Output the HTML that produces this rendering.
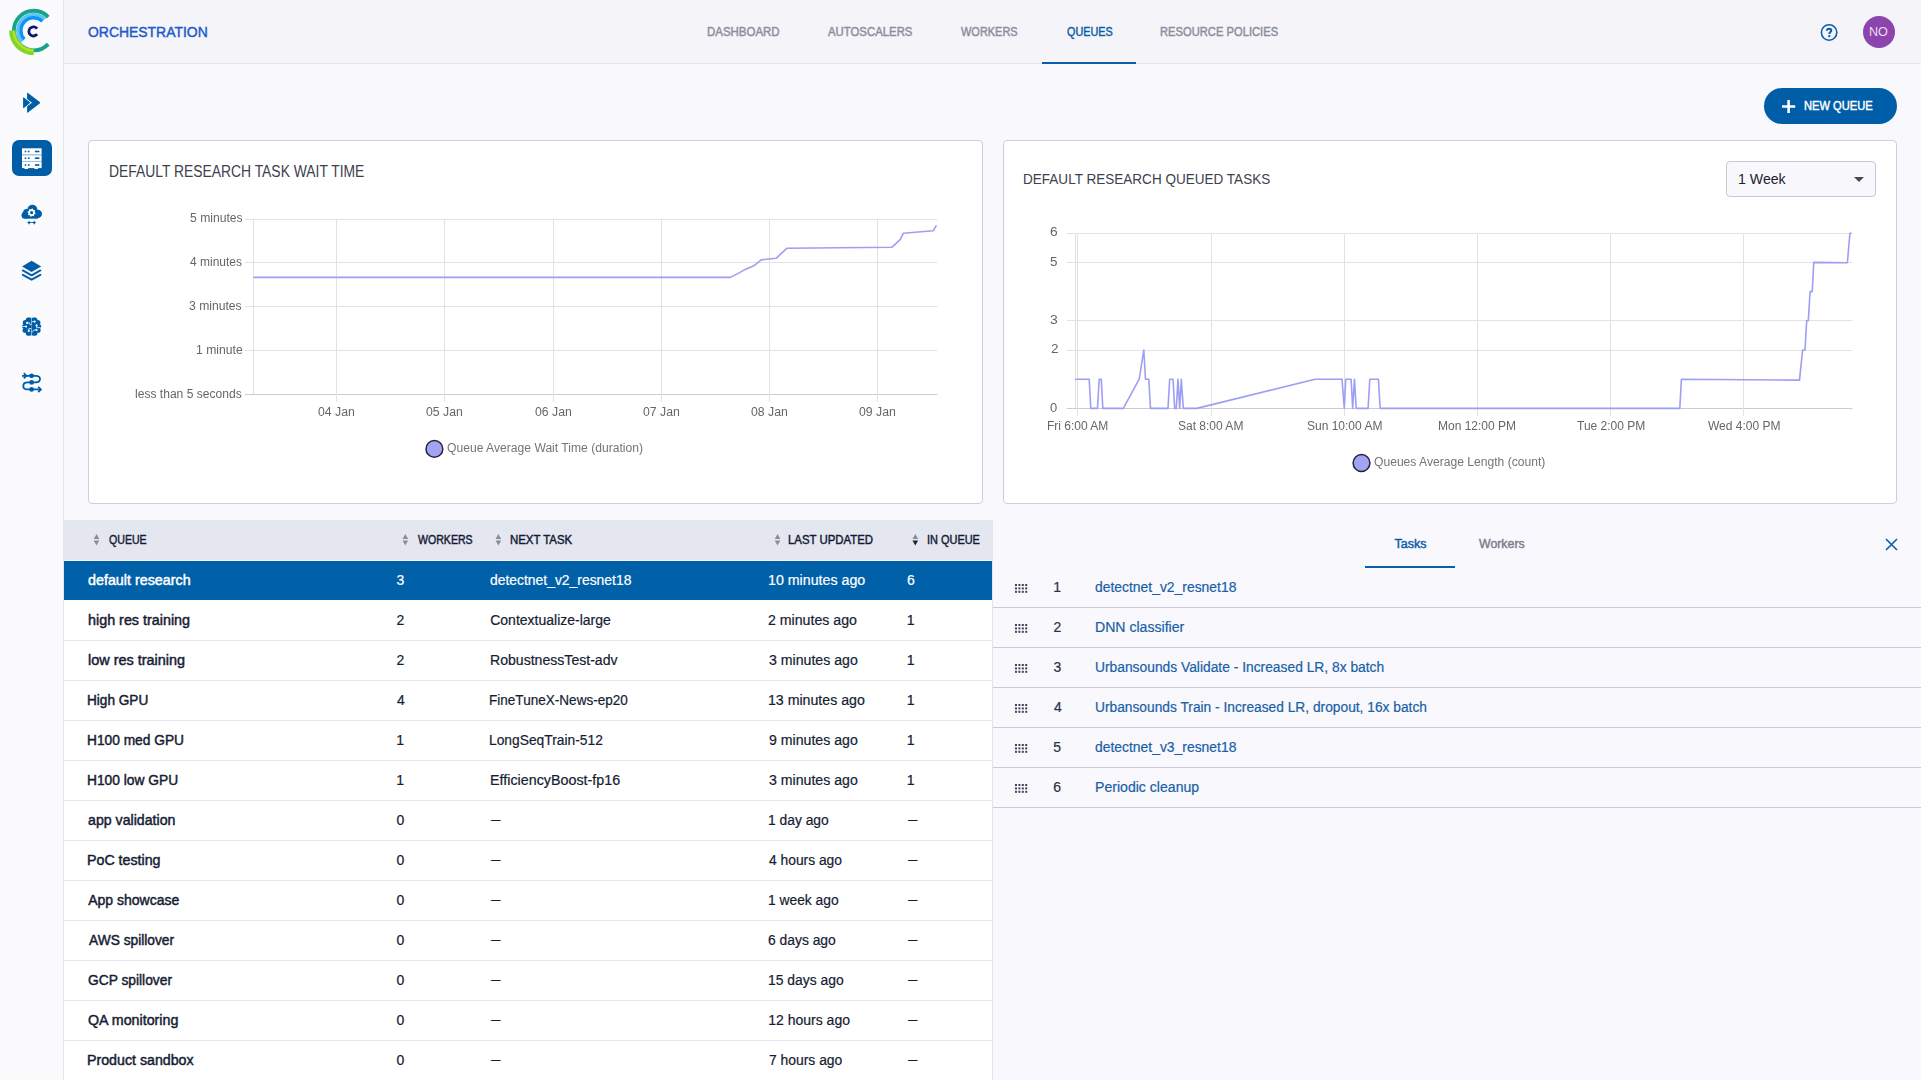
<!DOCTYPE html>
<html><head><meta charset="utf-8"><title>Orchestration - Queues</title>
<style>
*{box-sizing:border-box;margin:0;padding:0}
html,body{width:1921px;height:1080px;overflow:hidden}
body{background:#f8f8fd;font-family:"Liberation Sans",sans-serif;position:relative}
.a{position:absolute}
.t{position:absolute;white-space:pre;line-height:0;transform-origin:0 0}
.g{will-change:transform}
svg{position:absolute;left:0;top:0;overflow:visible}
</style></head><body>
<!-- sidebar -->
<div class="a" style="left:0;top:0;width:64px;height:1080px;background:#fbfbfd;border-right:1px solid #e4e6ef"></div>
<!-- header -->
<div class="a" style="left:64px;top:0;width:1857px;height:64px;background:#f4f4f9;border-bottom:1px solid #e3e5ee"></div>
<div class="a" style="left:1042px;top:62px;width:94px;height:2px;background:#0d5ea8"></div>
<!-- selected nav box -->
<div class="a" style="left:12px;top:140px;width:40px;height:36px;border-radius:7px;background:#005ea8"></div>
<!-- avatar -->
<div class="a" style="left:1863px;top:16px;width:32px;height:32px;border-radius:50%;background:#8e44ad"></div>
<!-- new queue button -->
<div class="a" style="left:1764px;top:88px;width:133px;height:36px;border-radius:18px;background:#005ea8"></div>
<!-- cards -->
<div class="a" style="left:88px;top:140px;width:895px;height:364px;background:#fff;border:1px solid #cdd0dc;border-radius:4px"></div>
<div class="a" style="left:1003px;top:140px;width:894px;height:364px;background:#fff;border:1px solid #cdd0dc;border-radius:4px"></div>
<!-- dropdown -->
<div class="a" style="left:1726px;top:161px;width:150px;height:36px;background:#f8f8fc;border:1px solid #c6c8d4;border-radius:4px"></div>
<!-- table -->
<div class="a" style="left:64px;top:520px;width:929px;height:40px;background:#e5e7f0"></div>
<div class="a" style="left:64px;top:560px;width:928px;height:520px;background:#fff"></div>
<div class="a" style="left:64px;top:560px;width:928px;height:1px;background:#f2f2f8"></div>
<div class="a" style="left:64px;top:561px;width:928px;height:39px;background:#0060a8"></div>
<div class="a" style="left:992px;top:560px;width:1px;height:520px;background:#e3e5ee"></div>
<svg width="1921" height="1080" viewBox="0 0 1921 1080">
<line x1="245" y1="219.5" x2="937.5" y2="219.5" stroke="#e2e2e2" stroke-width="1"/>
<line x1="245" y1="262.5" x2="937.5" y2="262.5" stroke="#e2e2e2" stroke-width="1"/>
<line x1="245" y1="306.5" x2="937.5" y2="306.5" stroke="#e2e2e2" stroke-width="1"/>
<line x1="245" y1="350.5" x2="937.5" y2="350.5" stroke="#e2e2e2" stroke-width="1"/>
<line x1="245" y1="394.5" x2="937.5" y2="394.5" stroke="#cccccc" stroke-width="1"/>
<line x1="253.5" y1="219" x2="253.5" y2="394" stroke="#e2e2e2" stroke-width="1"/>
<line x1="336.5" y1="219" x2="336.5" y2="402" stroke="#e2e2e2" stroke-width="1"/>
<line x1="444.5" y1="219" x2="444.5" y2="402" stroke="#e2e2e2" stroke-width="1"/>
<line x1="553.5" y1="219" x2="553.5" y2="402" stroke="#e2e2e2" stroke-width="1"/>
<line x1="661.5" y1="219" x2="661.5" y2="402" stroke="#e2e2e2" stroke-width="1"/>
<line x1="769.5" y1="219" x2="769.5" y2="402" stroke="#e2e2e2" stroke-width="1"/>
<line x1="877.5" y1="219" x2="877.5" y2="402" stroke="#e2e2e2" stroke-width="1"/>
<polyline fill="none" stroke="#9e9ef4" stroke-width="1.6" stroke-linejoin="round" points="253.5,277.4 730.3,277.4 738.3,273.4 745.2,269.4 754.4,265.4 761.2,259.9 776.1,258.3 787,248.2 891.8,247.3 900.4,239.3 903.3,233.3 933.1,230.8 936.5,225.3"/>
<line x1="1067" y1="233.5" x2="1852.5" y2="233.5" stroke="#e2e2e2" stroke-width="1"/>
<line x1="1067" y1="262.5" x2="1852.5" y2="262.5" stroke="#e2e2e2" stroke-width="1"/>
<line x1="1067" y1="320.5" x2="1852.5" y2="320.5" stroke="#e2e2e2" stroke-width="1"/>
<line x1="1067" y1="350.5" x2="1852.5" y2="350.5" stroke="#e2e2e2" stroke-width="1"/>
<line x1="1067" y1="408.5" x2="1852.5" y2="408.5" stroke="#cccccc" stroke-width="1"/>
<line x1="1075.5" y1="233" x2="1075.5" y2="408" stroke="#e2e2e2" stroke-width="1"/>
<line x1="1077.5" y1="233" x2="1077.5" y2="416" stroke="#e2e2e2" stroke-width="1"/>
<line x1="1211.5" y1="233" x2="1211.5" y2="416" stroke="#e2e2e2" stroke-width="1"/>
<line x1="1344.5" y1="233" x2="1344.5" y2="416" stroke="#e2e2e2" stroke-width="1"/>
<line x1="1477.5" y1="233" x2="1477.5" y2="416" stroke="#e2e2e2" stroke-width="1"/>
<line x1="1610.5" y1="233" x2="1610.5" y2="416" stroke="#e2e2e2" stroke-width="1"/>
<line x1="1743.5" y1="233" x2="1743.5" y2="416" stroke="#e2e2e2" stroke-width="1"/>
<polyline fill="none" stroke="#9e9ef4" stroke-width="1.6" stroke-linejoin="round" points="1075.3,379.2 1089.2,379.2 1090.8,408.4 1097.5,408.4 1099.2,379.2 1101.3,379.2 1102.8,408.4 1123.3,408.4 1139.2,379.2 1143.8,350.0 1145.5,379.2 1148.8,379.2 1150.5,408.4 1168.0,408.4 1169.7,379.2 1173.0,379.2 1174.7,408.4 1176.3,408.4 1178.0,379.2 1179.7,408.4 1181.3,379.2 1183.3,408.4 1196.7,408.4 1315.0,379.2 1342.0,379.2 1344.3,408.4 1345.7,379.2 1351.1,379.2 1352.7,408.4 1354.5,379.2 1356.2,408.4 1368.1,408.4 1369.8,379.2 1378.4,379.2 1380.2,408.4 1679.8,408.4 1681.4,379.2 1799.5,380.1 1802.6,350.0 1805.0,350.0 1806.7,320.8 1808.3,320.8 1810.1,291.6 1812.2,291.6 1813.8,262.4 1847.4,262.7 1849.9,233.2 1851.5,233.2"/>
<circle cx="434.4" cy="448.9" r="8.4" fill="#a3a3f6" stroke="#23243a" stroke-width="1.5"/>
<circle cx="1361.5" cy="463" r="8.4" fill="#a3a3f6" stroke="#23243a" stroke-width="1.5"/>
<path d="M1854 177 L1864 177 L1859 182 Z" fill="#474a56"/>
<path d="M93.75 539 L99.35 539 L96.55 534 Z" fill="#8a8c96"/>
<path d="M93.75 540.5 L99.35 540.5 L96.55 545.5 Z" fill="#8a8c96"/>
<path d="M402.5 539 L408.1 539 L405.3 534 Z" fill="#8a8c96"/>
<path d="M402.5 540.5 L408.1 540.5 L405.3 545.5 Z" fill="#8a8c96"/>
<path d="M495.6 539 L501.20000000000005 539 L498.40000000000003 534 Z" fill="#8a8c96"/>
<path d="M495.6 540.5 L501.20000000000005 540.5 L498.40000000000003 545.5 Z" fill="#8a8c96"/>
<path d="M774.75 539 L780.35 539 L777.55 534 Z" fill="#8a8c96"/>
<path d="M774.75 540.5 L780.35 540.5 L777.55 545.5 Z" fill="#8a8c96"/>
<path d="M912.5 539 L918.1 539 L915.3 534 Z" fill="#8a8c96"/>
<path d="M912.5 540.5 L918.1 540.5 L915.3 545.5 Z" fill="#202230"/>
<line x1="64" y1="640.5" x2="992" y2="640.5" stroke="#e4e6ef" stroke-width="1"/>
<line x1="64" y1="680.5" x2="992" y2="680.5" stroke="#e4e6ef" stroke-width="1"/>
<line x1="64" y1="720.5" x2="992" y2="720.5" stroke="#e4e6ef" stroke-width="1"/>
<line x1="64" y1="760.5" x2="992" y2="760.5" stroke="#e4e6ef" stroke-width="1"/>
<line x1="64" y1="800.5" x2="992" y2="800.5" stroke="#e4e6ef" stroke-width="1"/>
<line x1="64" y1="840.5" x2="992" y2="840.5" stroke="#e4e6ef" stroke-width="1"/>
<line x1="64" y1="880.5" x2="992" y2="880.5" stroke="#e4e6ef" stroke-width="1"/>
<line x1="64" y1="920.5" x2="992" y2="920.5" stroke="#e4e6ef" stroke-width="1"/>
<line x1="64" y1="960.5" x2="992" y2="960.5" stroke="#e4e6ef" stroke-width="1"/>
<line x1="64" y1="1000.5" x2="992" y2="1000.5" stroke="#e4e6ef" stroke-width="1"/>
<line x1="64" y1="1040.5" x2="992" y2="1040.5" stroke="#e4e6ef" stroke-width="1"/>
<line x1="993" y1="607.5" x2="1921" y2="607.5" stroke="#c9cbd6" stroke-width="1"/>
<rect x="1015.0" y="584.0" width="2" height="2" fill="#3e4152"/>
<rect x="1018.4" y="584.0" width="2" height="2" fill="#3e4152"/>
<rect x="1021.8" y="584.0" width="2" height="2" fill="#3e4152"/>
<rect x="1025.2" y="584.0" width="2" height="2" fill="#3e4152"/>
<rect x="1015.0" y="587.4" width="2" height="2" fill="#3e4152"/>
<rect x="1018.4" y="587.4" width="2" height="2" fill="#3e4152"/>
<rect x="1021.8" y="587.4" width="2" height="2" fill="#3e4152"/>
<rect x="1025.2" y="587.4" width="2" height="2" fill="#3e4152"/>
<rect x="1015.0" y="590.8" width="2" height="2" fill="#3e4152"/>
<rect x="1018.4" y="590.8" width="2" height="2" fill="#3e4152"/>
<rect x="1021.8" y="590.8" width="2" height="2" fill="#3e4152"/>
<rect x="1025.2" y="590.8" width="2" height="2" fill="#3e4152"/>
<line x1="993" y1="647.5" x2="1921" y2="647.5" stroke="#c9cbd6" stroke-width="1"/>
<rect x="1015.0" y="624.0" width="2" height="2" fill="#3e4152"/>
<rect x="1018.4" y="624.0" width="2" height="2" fill="#3e4152"/>
<rect x="1021.8" y="624.0" width="2" height="2" fill="#3e4152"/>
<rect x="1025.2" y="624.0" width="2" height="2" fill="#3e4152"/>
<rect x="1015.0" y="627.4" width="2" height="2" fill="#3e4152"/>
<rect x="1018.4" y="627.4" width="2" height="2" fill="#3e4152"/>
<rect x="1021.8" y="627.4" width="2" height="2" fill="#3e4152"/>
<rect x="1025.2" y="627.4" width="2" height="2" fill="#3e4152"/>
<rect x="1015.0" y="630.8" width="2" height="2" fill="#3e4152"/>
<rect x="1018.4" y="630.8" width="2" height="2" fill="#3e4152"/>
<rect x="1021.8" y="630.8" width="2" height="2" fill="#3e4152"/>
<rect x="1025.2" y="630.8" width="2" height="2" fill="#3e4152"/>
<line x1="993" y1="687.5" x2="1921" y2="687.5" stroke="#c9cbd6" stroke-width="1"/>
<rect x="1015.0" y="664.0" width="2" height="2" fill="#3e4152"/>
<rect x="1018.4" y="664.0" width="2" height="2" fill="#3e4152"/>
<rect x="1021.8" y="664.0" width="2" height="2" fill="#3e4152"/>
<rect x="1025.2" y="664.0" width="2" height="2" fill="#3e4152"/>
<rect x="1015.0" y="667.4" width="2" height="2" fill="#3e4152"/>
<rect x="1018.4" y="667.4" width="2" height="2" fill="#3e4152"/>
<rect x="1021.8" y="667.4" width="2" height="2" fill="#3e4152"/>
<rect x="1025.2" y="667.4" width="2" height="2" fill="#3e4152"/>
<rect x="1015.0" y="670.8" width="2" height="2" fill="#3e4152"/>
<rect x="1018.4" y="670.8" width="2" height="2" fill="#3e4152"/>
<rect x="1021.8" y="670.8" width="2" height="2" fill="#3e4152"/>
<rect x="1025.2" y="670.8" width="2" height="2" fill="#3e4152"/>
<line x1="993" y1="727.5" x2="1921" y2="727.5" stroke="#c9cbd6" stroke-width="1"/>
<rect x="1015.0" y="704.0" width="2" height="2" fill="#3e4152"/>
<rect x="1018.4" y="704.0" width="2" height="2" fill="#3e4152"/>
<rect x="1021.8" y="704.0" width="2" height="2" fill="#3e4152"/>
<rect x="1025.2" y="704.0" width="2" height="2" fill="#3e4152"/>
<rect x="1015.0" y="707.4" width="2" height="2" fill="#3e4152"/>
<rect x="1018.4" y="707.4" width="2" height="2" fill="#3e4152"/>
<rect x="1021.8" y="707.4" width="2" height="2" fill="#3e4152"/>
<rect x="1025.2" y="707.4" width="2" height="2" fill="#3e4152"/>
<rect x="1015.0" y="710.8" width="2" height="2" fill="#3e4152"/>
<rect x="1018.4" y="710.8" width="2" height="2" fill="#3e4152"/>
<rect x="1021.8" y="710.8" width="2" height="2" fill="#3e4152"/>
<rect x="1025.2" y="710.8" width="2" height="2" fill="#3e4152"/>
<line x1="993" y1="767.5" x2="1921" y2="767.5" stroke="#c9cbd6" stroke-width="1"/>
<rect x="1015.0" y="744.0" width="2" height="2" fill="#3e4152"/>
<rect x="1018.4" y="744.0" width="2" height="2" fill="#3e4152"/>
<rect x="1021.8" y="744.0" width="2" height="2" fill="#3e4152"/>
<rect x="1025.2" y="744.0" width="2" height="2" fill="#3e4152"/>
<rect x="1015.0" y="747.4" width="2" height="2" fill="#3e4152"/>
<rect x="1018.4" y="747.4" width="2" height="2" fill="#3e4152"/>
<rect x="1021.8" y="747.4" width="2" height="2" fill="#3e4152"/>
<rect x="1025.2" y="747.4" width="2" height="2" fill="#3e4152"/>
<rect x="1015.0" y="750.8" width="2" height="2" fill="#3e4152"/>
<rect x="1018.4" y="750.8" width="2" height="2" fill="#3e4152"/>
<rect x="1021.8" y="750.8" width="2" height="2" fill="#3e4152"/>
<rect x="1025.2" y="750.8" width="2" height="2" fill="#3e4152"/>
<line x1="993" y1="807.5" x2="1921" y2="807.5" stroke="#c9cbd6" stroke-width="1"/>
<rect x="1015.0" y="784.0" width="2" height="2" fill="#3e4152"/>
<rect x="1018.4" y="784.0" width="2" height="2" fill="#3e4152"/>
<rect x="1021.8" y="784.0" width="2" height="2" fill="#3e4152"/>
<rect x="1025.2" y="784.0" width="2" height="2" fill="#3e4152"/>
<rect x="1015.0" y="787.4" width="2" height="2" fill="#3e4152"/>
<rect x="1018.4" y="787.4" width="2" height="2" fill="#3e4152"/>
<rect x="1021.8" y="787.4" width="2" height="2" fill="#3e4152"/>
<rect x="1025.2" y="787.4" width="2" height="2" fill="#3e4152"/>
<rect x="1015.0" y="790.8" width="2" height="2" fill="#3e4152"/>
<rect x="1018.4" y="790.8" width="2" height="2" fill="#3e4152"/>
<rect x="1021.8" y="790.8" width="2" height="2" fill="#3e4152"/>
<rect x="1025.2" y="790.8" width="2" height="2" fill="#3e4152"/>
<rect x="1365" y="566" width="90" height="2" fill="#0d5ea8"/>
<path d="M1886 539 L1897 550 M1897 539 L1886 550" stroke="#0d5ea8" stroke-width="1.6"/>
<path d="M1788.6 100 V113 M1782 106.5 H1795.2" stroke="#fff" stroke-width="2.6"/>
</svg><svg width="1921" height="1080" viewBox="0 0 1921 1080">
<path d="M48.18 17.10 A19.8 19.8 0 1 0 48.18 44.10" fill="none" stroke="#17a589" stroke-width="3.9"/>
<path d="M44.88 19.02 A16.1 16.1 0 0 0 22.12 41.78" fill="none" stroke="#5cc4f6" stroke-width="3.4"/>
<path d="M42.43 21.24 A12.8 12.8 0 0 0 24.34 39.33" fill="none" stroke="#0a96f2" stroke-width="3.4"/>
<path d="M10.70 30.60 A23 23 0 0 0 33.70 53.60" fill="none" stroke="#7fd629" stroke-width="3.2"/>
<path d="M13.80 30.60 A19.9 19.9 0 0 0 33.70 50.50" fill="none" stroke="#b2e21b" stroke-width="3.0"/>
<path d="M37.12 28.57 A4.6 4.6 0 1 0 37.12 34.23" fill="none" stroke="#0b1a6b" stroke-width="2.8"/>
<path d="M23.6 97.8 L29.8 102.7 L23.6 107.7 Z" fill="#005ea8" stroke="#005ea8" stroke-width="1" stroke-linejoin="round"/>
<path d="M27.6 93.2 L40 102.7 L27.6 112.3 L27.6 106.4 L32.8 102.7 L27.6 99 Z" fill="#005ea8" stroke="#005ea8" stroke-width="1" stroke-linejoin="round"/>
<rect x="22" y="148.3" width="19.6" height="6.2" fill="#fff"/>
<rect x="22" y="155.2" width="19.6" height="6.0" fill="#fff"/>
<rect x="22" y="161.9" width="19.6" height="6.2" fill="#fff"/>
<rect x="22" y="154.5" width="19.6" height="0.8" fill="#d6e2ee"/>
<rect x="22" y="161.2" width="19.6" height="0.8" fill="#b9cfe2"/>
<rect x="24.7" y="150.7" width="1.6" height="1.6" fill="#005ea8"/>
<rect x="27.9" y="150.7" width="1.6" height="1.6" fill="#005ea8"/>
<rect x="34.9" y="150.7" width="4.5" height="1.6" fill="#005ea8"/>
<rect x="24.7" y="157.39999999999998" width="1.6" height="1.6" fill="#005ea8"/>
<rect x="27.9" y="157.39999999999998" width="1.6" height="1.6" fill="#005ea8"/>
<rect x="34.9" y="157.39999999999998" width="4.5" height="1.6" fill="#005ea8"/>
<rect x="24.7" y="164.2" width="1.6" height="1.6" fill="#005ea8"/>
<rect x="27.9" y="164.2" width="1.6" height="1.6" fill="#005ea8"/>
<rect x="34.9" y="164.2" width="4.5" height="1.6" fill="#005ea8"/>
<rect x="24.5" y="168" width="3.5" height="1" fill="#fff"/><rect x="34.5" y="168" width="3.5" height="1" fill="#fff"/>
<circle cx="32.4" cy="209.8" r="5.0" fill="#005ea8"/>
<circle cx="26.6" cy="212.4" r="3.5" fill="#005ea8"/>
<circle cx="25.0" cy="215.2" r="3.5" fill="#005ea8"/>
<circle cx="37.8" cy="213.9" r="4.2" fill="#005ea8"/>
<rect x="25" y="212" width="13" height="6.7" fill="#005ea8"/>
<polygon points="35.92,213.46 34.18,214.32 34.04,216.26 32.20,215.64 30.74,216.92 29.88,215.18 27.94,215.04 28.56,213.20 27.28,211.74 29.02,210.88 29.16,208.94 31.00,209.56 32.46,208.28 33.32,210.02 35.26,210.16 34.64,212.00" fill="#fff"/>
<circle cx="31.6" cy="212.6" r="1.6" fill="#005ea8"/>
<path d="M29.1 220.4 Q29.6 222.1 31.3 222.6 Q29.6 223.1 29.1 224.79999999999998 Q28.6 223.1 26.900000000000002 222.6 Q28.6 222.1 29.1 220.4 Z" fill="#005ea8"/>
<path d="M34.2 220.4 Q34.7 222.1 36.400000000000006 222.6 Q34.7 223.1 34.2 224.79999999999998 Q33.7 223.1 32.0 222.6 Q33.7 222.1 34.2 220.4 Z" fill="#005ea8"/>
<rect x="29" y="222.2" width="5.3" height="0.8" fill="#005ea8"/>
<path d="M31.6 260.8 L41.2 266.4 L31.6 272 L22 266.4 Z" fill="#005ea8"/>
<path d="M22.8 270.4 L31.6 275.3 L40.4 270.4" fill="none" stroke="#005ea8" stroke-width="1.9" stroke-linecap="round" stroke-linejoin="round"/>
<path d="M22.8 274.8 L31.6 279.7 L40.4 274.8" fill="none" stroke="#005ea8" stroke-width="1.9" stroke-linecap="round" stroke-linejoin="round"/>
<g transform="translate(31.6 326.4) scale(0.92) translate(-31.6 -326.4)">
<clipPath id="bl"><rect x="18" y="312" width="13.35" height="28"/></clipPath><clipPath id="br"><rect x="31.85" y="312" width="14" height="28"/></clipPath>
<g clip-path="url(#bl)"><circle cx="28.2" cy="319.6" r="3.0" fill="#005ea8"/><circle cx="24.9" cy="322.3" r="2.9" fill="#005ea8"/><circle cx="23.7" cy="326.6" r="2.6" fill="#005ea8"/><circle cx="24.6" cy="330.6" r="2.8" fill="#005ea8"/><circle cx="28.0" cy="333.5" r="2.8" fill="#005ea8"/><circle cx="29.2" cy="326.5" r="3.6" fill="#005ea8"/><rect x="27" y="317" width="5" height="19.3" fill="#005ea8"/></g>
<g clip-path="url(#br)"><circle cx="35.0" cy="319.6" r="3.0" fill="#005ea8"/><circle cx="38.300000000000004" cy="322.3" r="2.9" fill="#005ea8"/><circle cx="39.5" cy="326.6" r="2.6" fill="#005ea8"/><circle cx="38.6" cy="330.6" r="2.8" fill="#005ea8"/><circle cx="35.2" cy="333.5" r="2.8" fill="#005ea8"/><circle cx="34.0" cy="326.5" r="3.6" fill="#005ea8"/><rect x="31" y="317" width="5" height="19.3" fill="#005ea8"/></g>
<path d="M21 326.5 H25.6 M26.7 322.6 H29.6 V324.3 H31.4 M28.6 331.3 V328.7 H31.4 M31.8 321.2 H34.9 M37 325.3 V327.7 H41.5 M37 330.3 H34 L32.6 332.3 H31.8" fill="none" stroke="#ffffff" stroke-width="0.8"/>
<circle cx="25.6" cy="326.5" r="1.15" fill="#ffffff"/>
<circle cx="26.7" cy="322.6" r="1.15" fill="#ffffff"/>
<circle cx="28.6" cy="331.3" r="1.15" fill="#ffffff"/>
<circle cx="34.9" cy="321.2" r="1.15" fill="#ffffff"/>
<circle cx="37" cy="325.3" r="1.15" fill="#ffffff"/>
<circle cx="37" cy="330.3" r="1.15" fill="#ffffff"/>
</g>
<path d="M22 375.8 H35.6 C38.4 375.8 40 377.3 40 379.1 C40 380.9 38.4 382.4 35.6 382.4 H27.6 C24.8 382.4 23.3 384.1 23.3 385.9 C23.3 387.8 24.8 389.4 27.6 389.4 H40.6" fill="none" stroke="#005ea8" stroke-width="1.8"/>
<path d="M23.8 373.2 L26.4 375.8 L23.8 378.4" fill="none" stroke="#005ea8" stroke-width="1.8"/>
<path d="M38.2 386.8 L40.9 389.4 L38.2 392" fill="none" stroke="#005ea8" stroke-width="1.8"/>
<circle cx="31.6" cy="375.8" r="2.4" fill="#005ea8"/>
<circle cx="31.6" cy="382.4" r="2.4" fill="#005ea8"/>
<circle cx="31.6" cy="389.4" r="2.4" fill="#005ea8"/>
<circle cx="1829.1" cy="32.5" r="7.7" fill="none" stroke="#0d5ea8" stroke-width="1.6"/>
<path d="M1827 30.7 C1827 29.3 1827.9 28.7 1829.1 28.7 C1830.4 28.7 1831.3 29.4 1831.3 30.5 C1831.3 32 1829.3 32.1 1829.3 34" fill="none" stroke="#0d5ea8" stroke-width="2"/>
<circle cx="1829.3" cy="36.2" r="1.15" fill="#0d5ea8"/>
</svg>
<span class="t" style="left:88.44px;top:32.20px;font-size:15px;color:#2259c9;-webkit-text-stroke:0.45px #2259c9;transform:scaleX(0.9286);">ORCHESTRATION</span>
<span class="t" style="left:706.72px;top:32.20px;font-size:12.5px;color:#8b8e9a;-webkit-text-stroke:0.45px #8b8e9a;transform:scaleX(0.9167);">DASHBOARD</span>
<span class="t" style="left:828.48px;top:32.20px;font-size:12.5px;color:#8b8e9a;-webkit-text-stroke:0.45px #8b8e9a;transform:scaleX(0.9092);">AUTOSCALERS</span>
<span class="t" style="left:960.95px;top:32.20px;font-size:12.5px;color:#8b8e9a;-webkit-text-stroke:0.45px #8b8e9a;transform:scaleX(0.8772);">WORKERS</span>
<span class="t" style="left:1066.58px;top:32.20px;font-size:12.5px;color:#0d5ea8;-webkit-text-stroke:0.45px #0d5ea8;transform:scaleX(0.8645);">QUEUES</span>
<span class="t" style="left:1160.23px;top:32.20px;font-size:12.5px;color:#8b8e9a;-webkit-text-stroke:0.45px #8b8e9a;transform:scaleX(0.8949);">RESOURCE POLICIES</span>
<span class="t" style="left:1868.85px;top:32.00px;font-size:12px;color:#eadcf2;transform:scaleX(1.0524);">NO</span>
<span class="t" style="left:1804.02px;top:106.30px;font-size:13px;color:#ffffff;-webkit-text-stroke:0.45px #ffffff;transform:scaleX(0.8568);">NEW QUEUE</span>
<span class="t" style="left:108.58px;top:172.30px;font-size:16px;color:#3d404e;transform:scaleX(0.8669);">DEFAULT RESEARCH TASK WAIT TIME</span>
<span class="t" style="left:1023.08px;top:179.20px;font-size:15.5px;color:#3d404e;transform:scaleX(0.8733);">DEFAULT RESEARCH QUEUED TASKS</span>
<span class="t" style="left:1737.67px;top:179.20px;font-size:15px;color:#1e2030;transform:scaleX(0.9426);">1 Week</span>
<span class="t g" style="left:189.68px;top:217.80px;font-size:12px;color:#666666;transform:scaleX(1.0126);">5 minutes</span>
<span class="t g" style="left:190.03px;top:261.80px;font-size:12px;color:#666666;">4 minutes</span>
<span class="t g" style="left:189.09px;top:305.50px;font-size:12px;color:#666666;transform:scaleX(1.0126);">3 minutes</span>
<span class="t g" style="left:195.52px;top:349.90px;font-size:12px;color:#666666;transform:scaleX(1.0147);">1 minute</span>
<span class="t g" style="left:135.39px;top:393.90px;font-size:12px;color:#666666;transform:scaleX(1.0056);">less than 5 seconds</span>
<span class="t g" style="left:317.94px;top:412.20px;font-size:12px;color:#666666;transform:scaleX(1.0219);">04 Jan</span>
<span class="t g" style="left:426.30px;top:412.20px;font-size:12px;color:#666666;transform:scaleX(1.0219);">05 Jan</span>
<span class="t g" style="left:534.66px;top:412.20px;font-size:12px;color:#666666;transform:scaleX(1.0219);">06 Jan</span>
<span class="t g" style="left:643.02px;top:412.20px;font-size:12px;color:#666666;transform:scaleX(1.0219);">07 Jan</span>
<span class="t g" style="left:750.58px;top:412.20px;font-size:12px;color:#666666;transform:scaleX(1.0219);">08 Jan</span>
<span class="t g" style="left:858.94px;top:412.20px;font-size:12px;color:#666666;transform:scaleX(1.0219);">09 Jan</span>
<span class="t g" style="left:446.71px;top:448.00px;font-size:12px;color:#757575;transform:scaleX(1.0101);">Queue Average Wait Time (duration)</span>
<span class="t g" style="left:1050.49px;top:232.20px;font-size:12px;color:#666666;transform:scaleX(1.1461);">6</span>
<span class="t g" style="left:1050.07px;top:262.00px;font-size:12px;color:#666666;transform:scaleX(1.1214);">5</span>
<span class="t g" style="left:1050.29px;top:320.30px;font-size:12px;color:#666666;transform:scaleX(1.1625);">3</span>
<span class="t g" style="left:1050.52px;top:349.40px;font-size:12px;color:#666666;transform:scaleX(1.1245);">2</span>
<span class="t g" style="left:1050.35px;top:408.30px;font-size:12px;color:#666666;transform:scaleX(1.0771);">0</span>
<span class="t g" style="left:1047.22px;top:425.90px;font-size:12px;color:#666666;">Fri 6:00 AM</span>
<span class="t g" style="left:1178.41px;top:425.90px;font-size:12px;color:#666666;">Sat 8:00 AM</span>
<span class="t g" style="left:1306.60px;top:425.90px;font-size:12px;color:#666666;">Sun 10:00 AM</span>
<span class="t g" style="left:1438.48px;top:425.90px;font-size:12px;color:#666666;">Mon 12:00 PM</span>
<span class="t g" style="left:1576.57px;top:425.90px;font-size:12px;color:#666666;">Tue 2:00 PM</span>
<span class="t g" style="left:1707.66px;top:425.90px;font-size:12px;color:#666666;">Wed 4:00 PM</span>
<span class="t g" style="left:1373.97px;top:462.30px;font-size:12px;color:#757575;transform:scaleX(1.0087);">Queues Average Length (count)</span>
<span class="t" style="left:108.80px;top:540.40px;font-size:12.5px;color:#141b34;-webkit-text-stroke:0.45px #141b34;transform:scaleX(0.8475);">QUEUE</span>
<span class="t" style="left:417.60px;top:540.40px;font-size:12.5px;color:#141b34;-webkit-text-stroke:0.45px #141b34;transform:scaleX(0.8459);">WORKERS</span>
<span class="t" style="left:510.16px;top:540.40px;font-size:12.5px;color:#141b34;-webkit-text-stroke:0.45px #141b34;transform:scaleX(0.9136);">NEXT TASK</span>
<span class="t" style="left:788.13px;top:540.40px;font-size:12.5px;color:#141b34;-webkit-text-stroke:0.45px #141b34;transform:scaleX(0.9120);">LAST UPDATED</span>
<span class="t" style="left:926.92px;top:540.40px;font-size:12.5px;color:#141b34;-webkit-text-stroke:0.45px #141b34;transform:scaleX(0.8755);">IN QUEUE</span>
<span class="t" style="left:87.82px;top:579.90px;font-size:14px;color:#ffffff;-webkit-text-stroke:0.45px #ffffff;transform:scaleX(1.0220);">default research</span>
<span class="t" style="left:396.47px;top:579.90px;font-size:14px;color:#ffffff;-webkit-text-stroke:0.2px #ffffff;">3</span>
<span class="t" style="left:490.09px;top:579.90px;font-size:14px;color:#ffffff;-webkit-text-stroke:0.2px #ffffff;transform:scaleX(0.9925);">detectnet_v2_resnet18</span>
<span class="t" style="left:907.09px;top:579.90px;font-size:14px;color:#ffffff;-webkit-text-stroke:0.2px #ffffff;">6</span>
<span class="t" style="left:768.23px;top:579.90px;font-size:14px;color:#ffffff;-webkit-text-stroke:0.2px #ffffff;transform:scaleX(1.0157);">10 minutes ago</span>
<span class="t" style="left:87.52px;top:619.90px;font-size:14px;color:#161c33;-webkit-text-stroke:0.45px #161c33;transform:scaleX(1.0245);">high res training</span>
<span class="t" style="left:396.42px;top:619.90px;font-size:14px;color:#161c33;-webkit-text-stroke:0.2px #161c33;">2</span>
<span class="t" style="left:490.23px;top:619.90px;font-size:14px;color:#161c33;-webkit-text-stroke:0.2px #161c33;">Contextualize-large</span>
<span class="t" style="left:906.75px;top:619.90px;font-size:14px;color:#161c33;-webkit-text-stroke:0.2px #161c33;">1</span>
<span class="t" style="left:768.22px;top:619.90px;font-size:14px;color:#161c33;-webkit-text-stroke:0.2px #161c33;transform:scaleX(1.0106);">2 minutes ago</span>
<span class="t" style="left:87.64px;top:659.90px;font-size:14px;color:#161c33;-webkit-text-stroke:0.45px #161c33;transform:scaleX(1.0307);">low res training</span>
<span class="t" style="left:396.42px;top:659.90px;font-size:14px;color:#161c33;-webkit-text-stroke:0.2px #161c33;">2</span>
<span class="t" style="left:489.53px;top:659.90px;font-size:14px;color:#161c33;-webkit-text-stroke:0.2px #161c33;transform:scaleX(1.0055);">RobustnessTest-adv</span>
<span class="t" style="left:906.75px;top:659.90px;font-size:14px;color:#161c33;-webkit-text-stroke:0.2px #161c33;">1</span>
<span class="t" style="left:768.75px;top:659.90px;font-size:14px;color:#161c33;-webkit-text-stroke:0.2px #161c33;transform:scaleX(1.0092);">3 minutes ago</span>
<span class="t" style="left:87.10px;top:699.90px;font-size:14px;color:#161c33;-webkit-text-stroke:0.45px #161c33;transform:scaleX(0.9714);">High GPU</span>
<span class="t" style="left:396.89px;top:699.90px;font-size:14px;color:#161c33;-webkit-text-stroke:0.2px #161c33;">4</span>
<span class="t" style="left:489.46px;top:699.90px;font-size:14px;color:#161c33;-webkit-text-stroke:0.2px #161c33;transform:scaleX(0.9682);">FineTuneX-News-ep20</span>
<span class="t" style="left:906.75px;top:699.90px;font-size:14px;color:#161c33;-webkit-text-stroke:0.2px #161c33;">1</span>
<span class="t" style="left:768.23px;top:699.90px;font-size:14px;color:#161c33;-webkit-text-stroke:0.2px #161c33;transform:scaleX(1.0113);">13 minutes ago</span>
<span class="t" style="left:87.10px;top:739.90px;font-size:14px;color:#161c33;-webkit-text-stroke:0.45px #161c33;transform:scaleX(0.9813);">H100 med GPU</span>
<span class="t" style="left:396.15px;top:739.90px;font-size:14px;color:#161c33;-webkit-text-stroke:0.2px #161c33;">1</span>
<span class="t" style="left:489.47px;top:739.90px;font-size:14px;color:#161c33;-webkit-text-stroke:0.2px #161c33;transform:scaleX(0.9857);">LongSeqTrain-512</span>
<span class="t" style="left:906.75px;top:739.90px;font-size:14px;color:#161c33;-webkit-text-stroke:0.2px #161c33;">1</span>
<span class="t" style="left:768.56px;top:739.90px;font-size:14px;color:#161c33;-webkit-text-stroke:0.2px #161c33;transform:scaleX(1.0095);">9 minutes ago</span>
<span class="t" style="left:87.10px;top:779.90px;font-size:14px;color:#161c33;-webkit-text-stroke:0.45px #161c33;transform:scaleX(0.9844);">H100 low GPU</span>
<span class="t" style="left:396.15px;top:779.90px;font-size:14px;color:#161c33;-webkit-text-stroke:0.2px #161c33;">1</span>
<span class="t" style="left:490.21px;top:779.90px;font-size:14px;color:#161c33;-webkit-text-stroke:0.2px #161c33;transform:scaleX(1.0215);">EfficiencyBoost-fp16</span>
<span class="t" style="left:906.75px;top:779.90px;font-size:14px;color:#161c33;-webkit-text-stroke:0.2px #161c33;">1</span>
<span class="t" style="left:768.75px;top:779.90px;font-size:14px;color:#161c33;-webkit-text-stroke:0.2px #161c33;transform:scaleX(1.0092);">3 minutes ago</span>
<span class="t" style="left:87.82px;top:819.90px;font-size:14px;color:#161c33;-webkit-text-stroke:0.45px #161c33;transform:scaleX(1.0115);">app validation</span>
<span class="t" style="left:396.50px;top:819.90px;font-size:14px;color:#161c33;-webkit-text-stroke:0.2px #161c33;">0</span>
<span class="t" style="left:490.61px;top:818.90px;font-size:14px;color:#161c33;-webkit-text-stroke:0.2px #161c33;transform:scaleX(0.6738);">—</span>
<span class="t" style="left:908.33px;top:818.90px;font-size:14px;color:#161c33;-webkit-text-stroke:0.2px #161c33;transform:scaleX(0.6738);">—</span>
<span class="t" style="left:768.30px;top:819.90px;font-size:14px;color:#161c33;-webkit-text-stroke:0.2px #161c33;transform:scaleX(0.9877);">1 day ago</span>
<span class="t" style="left:86.99px;top:859.90px;font-size:14px;color:#161c33;-webkit-text-stroke:0.45px #161c33;transform:scaleX(1.0158);">PoC testing</span>
<span class="t" style="left:396.50px;top:859.90px;font-size:14px;color:#161c33;-webkit-text-stroke:0.2px #161c33;">0</span>
<span class="t" style="left:490.61px;top:858.90px;font-size:14px;color:#161c33;-webkit-text-stroke:0.2px #161c33;transform:scaleX(0.6738);">—</span>
<span class="t" style="left:908.33px;top:858.90px;font-size:14px;color:#161c33;-webkit-text-stroke:0.2px #161c33;transform:scaleX(0.6738);">—</span>
<span class="t" style="left:769.46px;top:859.90px;font-size:14px;color:#161c33;-webkit-text-stroke:0.2px #161c33;transform:scaleX(0.9872);">4 hours ago</span>
<span class="t" style="left:88.20px;top:899.90px;font-size:14px;color:#161c33;-webkit-text-stroke:0.45px #161c33;">App showcase</span>
<span class="t" style="left:396.50px;top:899.90px;font-size:14px;color:#161c33;-webkit-text-stroke:0.2px #161c33;">0</span>
<span class="t" style="left:490.61px;top:898.90px;font-size:14px;color:#161c33;-webkit-text-stroke:0.2px #161c33;transform:scaleX(0.6738);">—</span>
<span class="t" style="left:908.33px;top:898.90px;font-size:14px;color:#161c33;-webkit-text-stroke:0.2px #161c33;transform:scaleX(0.6738);">—</span>
<span class="t" style="left:768.31px;top:899.90px;font-size:14px;color:#161c33;-webkit-text-stroke:0.2px #161c33;transform:scaleX(0.9859);">1 week ago</span>
<span class="t" style="left:88.50px;top:939.90px;font-size:14px;color:#161c33;-webkit-text-stroke:0.45px #161c33;transform:scaleX(0.9821);">AWS spillover</span>
<span class="t" style="left:396.50px;top:939.90px;font-size:14px;color:#161c33;-webkit-text-stroke:0.2px #161c33;">0</span>
<span class="t" style="left:490.61px;top:938.90px;font-size:14px;color:#161c33;-webkit-text-stroke:0.2px #161c33;transform:scaleX(0.6738);">—</span>
<span class="t" style="left:908.33px;top:938.90px;font-size:14px;color:#161c33;-webkit-text-stroke:0.2px #161c33;transform:scaleX(0.6738);">—</span>
<span class="t" style="left:768.47px;top:939.90px;font-size:14px;color:#161c33;-webkit-text-stroke:0.2px #161c33;transform:scaleX(0.9896);">6 days ago</span>
<span class="t" style="left:87.71px;top:979.90px;font-size:14px;color:#161c33;-webkit-text-stroke:0.45px #161c33;transform:scaleX(0.9841);">GCP spillover</span>
<span class="t" style="left:396.50px;top:979.90px;font-size:14px;color:#161c33;-webkit-text-stroke:0.2px #161c33;">0</span>
<span class="t" style="left:490.61px;top:978.90px;font-size:14px;color:#161c33;-webkit-text-stroke:0.2px #161c33;transform:scaleX(0.6738);">—</span>
<span class="t" style="left:908.33px;top:978.90px;font-size:14px;color:#161c33;-webkit-text-stroke:0.2px #161c33;transform:scaleX(0.6738);">—</span>
<span class="t" style="left:768.20px;top:979.90px;font-size:14px;color:#161c33;-webkit-text-stroke:0.2px #161c33;transform:scaleX(0.9925);">15 days ago</span>
<span class="t" style="left:87.80px;top:1019.90px;font-size:14px;color:#161c33;-webkit-text-stroke:0.45px #161c33;transform:scaleX(1.0189);">QA monitoring</span>
<span class="t" style="left:396.50px;top:1019.90px;font-size:14px;color:#161c33;-webkit-text-stroke:0.2px #161c33;">0</span>
<span class="t" style="left:490.61px;top:1018.90px;font-size:14px;color:#161c33;-webkit-text-stroke:0.2px #161c33;transform:scaleX(0.6738);">—</span>
<span class="t" style="left:908.33px;top:1018.90px;font-size:14px;color:#161c33;-webkit-text-stroke:0.2px #161c33;transform:scaleX(0.6738);">—</span>
<span class="t" style="left:768.25px;top:1019.90px;font-size:14px;color:#161c33;-webkit-text-stroke:0.2px #161c33;">12 hours ago</span>
<span class="t" style="left:86.99px;top:1059.90px;font-size:14px;color:#161c33;-webkit-text-stroke:0.45px #161c33;transform:scaleX(1.0145);">Product sandbox</span>
<span class="t" style="left:396.50px;top:1059.90px;font-size:14px;color:#161c33;-webkit-text-stroke:0.2px #161c33;">0</span>
<span class="t" style="left:490.61px;top:1058.90px;font-size:14px;color:#161c33;-webkit-text-stroke:0.2px #161c33;transform:scaleX(0.6738);">—</span>
<span class="t" style="left:908.33px;top:1058.90px;font-size:14px;color:#161c33;-webkit-text-stroke:0.2px #161c33;transform:scaleX(0.6738);">—</span>
<span class="t" style="left:768.64px;top:1059.90px;font-size:14px;color:#161c33;-webkit-text-stroke:0.2px #161c33;transform:scaleX(0.9913);">7 hours ago</span>
<span class="t" style="left:1394.45px;top:543.90px;font-size:12.5px;color:#0d5ea8;-webkit-text-stroke:0.45px #0d5ea8;">Tasks</span>
<span class="t" style="left:1479.28px;top:543.90px;font-size:12.5px;color:#7c7f8c;-webkit-text-stroke:0.45px #7c7f8c;transform:scaleX(0.9857);">Workers</span>
<span class="t" style="left:1053.15px;top:586.90px;font-size:14px;color:#2e3140;-webkit-text-stroke:0.2px #2e3140;">1</span>
<span class="t" style="left:1094.84px;top:586.90px;font-size:14px;color:#1a5fa6;-webkit-text-stroke:0.2px #1a5fa6;transform:scaleX(0.9927);">detectnet_v2_resnet18</span>
<span class="t" style="left:1053.42px;top:626.90px;font-size:14px;color:#2e3140;-webkit-text-stroke:0.2px #2e3140;">2</span>
<span class="t" style="left:1094.74px;top:626.90px;font-size:14px;color:#1a5fa6;-webkit-text-stroke:0.2px #1a5fa6;transform:scaleX(1.0066);">DNN classifier</span>
<span class="t" style="left:1053.47px;top:666.90px;font-size:14px;color:#2e3140;-webkit-text-stroke:0.2px #2e3140;">3</span>
<span class="t" style="left:1094.65px;top:666.90px;font-size:14px;color:#1a5fa6;-webkit-text-stroke:0.2px #1a5fa6;transform:scaleX(0.9866);">Urbansounds Validate - Increased LR, 8x batch</span>
<span class="t" style="left:1053.89px;top:706.90px;font-size:14px;color:#2e3140;-webkit-text-stroke:0.2px #2e3140;">4</span>
<span class="t" style="left:1094.65px;top:706.90px;font-size:14px;color:#1a5fa6;-webkit-text-stroke:0.2px #1a5fa6;transform:scaleX(0.9827);">Urbansounds Train - Increased LR, dropout, 16x batch</span>
<span class="t" style="left:1053.22px;top:746.90px;font-size:14px;color:#2e3140;-webkit-text-stroke:0.2px #2e3140;">5</span>
<span class="t" style="left:1094.84px;top:746.90px;font-size:14px;color:#1a5fa6;-webkit-text-stroke:0.2px #1a5fa6;transform:scaleX(0.9927);">detectnet_v3_resnet18</span>
<span class="t" style="left:1053.35px;top:786.90px;font-size:14px;color:#2e3140;-webkit-text-stroke:0.2px #2e3140;">6</span>
<span class="t" style="left:1094.67px;top:786.90px;font-size:14px;color:#1a5fa6;-webkit-text-stroke:0.2px #1a5fa6;transform:scaleX(1.0062);">Periodic cleanup</span>
</body></html>
